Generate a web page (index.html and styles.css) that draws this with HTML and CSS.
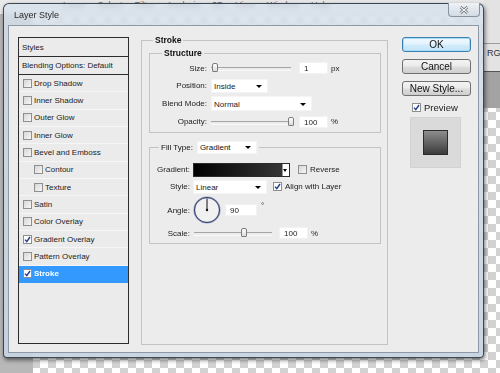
FILE: index.html
```html
<!DOCTYPE html>
<html lang="en">
<head>
  <meta charset="UTF-8">
  <meta name="viewport" content="width=device-width, initial-scale=1.0">
  <title>Layer Style</title>
  <link rel="stylesheet" href="styles.css">
</head>
<body>
  <div class="desk">
    <!-- Photoshop behind the dialog -->
    <div class="menubar">
      <span>Layer</span><span>Select</span><span>Filter</span><span>Analysis</span><span>3D</span><span>View</span><span>Window</span><span>Help</span>
    </div>
    <div class="side-panel">
      <div class="side-tab">RG</div>
    </div>

    <div class="window">
      <div class="titlebar">
        <span class="title">Layer Style</span>
        <button class="close-btn">
          <svg viewBox="0 0 10 8" width="10" height="8">
            <path d="M1.5 1 8.5 7M8.5 1 1.5 7" stroke="#5b5f66" stroke-width="2.6" fill="none"/>
            <path d="M1.5 1 8.5 7M8.5 1 1.5 7" stroke="#f4f6f8" stroke-width="1.1" fill="none"/>
          </svg>
        </button>
      </div>

      <div class="dialog">
        <ul class="style-list">
          <li class="list-head">Styles</li>
          <li class="list-head">Blending Options: Default</li>
          <li><span class="check"></span>Drop Shadow</li>
          <li><span class="check"></span>Inner Shadow</li>
          <li><span class="check"></span>Outer Glow</li>
          <li><span class="check"></span>Inner Glow</li>
          <li><span class="check"></span>Bevel and Emboss</li>
          <li class="sub"><span class="check"></span>Contour</li>
          <li class="sub"><span class="check"></span>Texture</li>
          <li><span class="check"></span>Satin</li>
          <li><span class="check"></span>Color Overlay</li>
          <li><span class="check on"><svg viewBox="0 0 7 7"><path d="M1 3.6 2.8 5.6 6 1"/></svg></span>Gradient Overlay</li>
          <li><span class="check"></span>Pattern Overlay</li>
          <li class="selected"><span class="check on"><svg viewBox="0 0 7 7"><path d="M1 3.6 2.8 5.6 6 1"/></svg></span>Stroke</li>
        </ul>

        <fieldset class="group stroke">
          <legend>Stroke</legend>

          <fieldset class="group structure">
            <legend>Structure</legend>
            <div class="form-grid">
              <label>Size:</label>
              <div class="ctrl">
                <div class="slider"><div class="range"><span class="thumb" style="left: 0%"></span></div></div>
                <span class="field">1</span><span class="unit">px</span>
              </div>

              <label>Position:</label>
              <div class="ctrl"><div class="select sel-position">Inside</div></div>

              <label>Blend Mode:</label>
              <div class="ctrl"><div class="select sel-blend">Normal</div></div>

              <label>Opacity:</label>
              <div class="ctrl">
                <div class="slider"><div class="range"><span class="thumb" style="left: 100%"></span></div></div>
                <span class="field">100</span><span class="unit">%</span>
              </div>
            </div>
          </fieldset>

          <fieldset class="group fill">
            <legend><span class="legend-label">Fill Type:</span><span class="select sel-fill">Gradient</span></legend>
            <div class="form-grid">
              <label>Gradient:</label>
              <div class="ctrl">
                <div class="gradient-pick"><span class="grad-fill"></span><span class="grad-arrow"></span></div>
                <span class="check gap-reverse"></span><span class="check-label">Reverse</span>
              </div>

              <label>Style:</label>
              <div class="ctrl">
                <div class="select sel-style">Linear</div>
                <span class="check on gap-align"><svg viewBox="0 0 7 7"><path d="M1 3.6 2.8 5.6 6 1"/></svg></span><span class="check-label">Align with Layer</span>
              </div>

              <label>Angle:</label>
              <div class="ctrl">
                <svg class="dial" viewBox="0 0 28 28" width="28" height="28">
                  <circle cx="14" cy="14" r="12.6" fill="#f1f1f1" stroke="#9aa3bd" stroke-width="2"/>
                  <circle cx="14" cy="14" r="12.6" fill="none" stroke="#3b4674" stroke-width="1"/>
                  <path d="M14 14V2.5" stroke="#111" stroke-width="1"/>
                  <circle cx="14" cy="14" r="1.2" fill="#111"/>
                </svg>
                <span class="field field-angle">90</span><span class="degree">°</span>
              </div>

              <label>Scale:</label>
              <div class="ctrl">
                <div class="slider slider-scale"><div class="range"><span class="thumb" style="left: 62%"></span></div></div>
                <span class="field">100</span><span class="unit">%</span>
              </div>
            </div>
          </fieldset>
        </fieldset>

        <div class="actions">
          <button class="btn btn-default">OK</button>
          <button class="btn">Cancel</button>
          <button class="btn">New Style...</button>
          <div class="preview-toggle">
            <span class="check on"><svg viewBox="0 0 7 7"><path d="M1 3.6 2.8 5.6 6 1"/></svg></span>Preview
          </div>
          <div class="preview-box"><span class="preview-swatch"></span></div>
        </div>
      </div>
    </div>
  </div>
</body>
</html>
```

FILE: styles.css
```css
* {
  margin: 0;
  padding: 0;
  box-sizing: border-box;
}

body {
  font-family: 'Liberation Sans', Arial, sans-serif;
  font-size: 8px;
  color: #1b1b1b;
  background: #b4b4b4;
}

/* Desktop behind the dialog */
.desk {
  position: relative;
  width: 500px;
  height: 373px;
  overflow: hidden;
  background:
    linear-gradient(#a3a3a3, #a3a3a3) right 0 top 72px / 16px 36px no-repeat,
    linear-gradient(#e3e3e3, #e3e3e3) right 0 top 0 / 16px 72px no-repeat,
    linear-gradient(#e9e9e9, #e9e9e9) left top / 100% 14px no-repeat,
    linear-gradient(#b8b8b8, #b8b8b8) left top / 33px 100% no-repeat,
    conic-gradient(#d2d2d2 25%, #fff 0 50%, #d2d2d2 0 75%, #fff 0) 0 0 / 16px 16px;
}

.menubar {
  position: absolute;
  top: 0;
  left: 63px;
  display: flex;
  gap: 12px;
  font-size: 9px;
  line-height: 10px;
  color: #6a6a6a;
}

.side-panel {
  position: absolute;
  left: 484px;
  top: 43px;
  width: 16px;
  height: 29px;
  border-top: 1px solid #9c9c9c;
  border-bottom: 1px solid #555;
}

.side-tab {
  padding: 4px 0 0 3px;
  font-size: 9px;
  color: #333;
  white-space: nowrap;
}

/* Aero window */
.window {
  position: absolute;
  left: 3px;
  top: 3px;
  width: 481px;
  height: 355px;
  padding: 0 4px 4px;
  border: 1px solid rgba(35, 45, 58, 0.85);
  border-radius: 6px 6px 4px 4px;
  background: linear-gradient(rgba(214, 224, 235, 0.8), rgba(198, 211, 225, 0.92));
  backdrop-filter: blur(2px);
  box-shadow: 1px 2px 4px rgba(0, 0, 0, 0.55);
}

.titlebar {
  display: flex;
  justify-content: space-between;
  align-items: flex-start;
  height: 21px;
  padding-left: 6px;
}

.title {
  align-self: center;
  font-size: 9px;
  color: #2b2b2b;
}

.close-btn {
  display: flex;
  align-items: center;
  justify-content: center;
  width: 32px;
  height: 14px;
  margin: -1px -1px 0 0;
  border: 1px solid #8893a1;
  border-top: 0;
  border-radius: 0 0 4px 4px;
  background: linear-gradient(#eef2f6, #d3dbe4);
}

.dialog {
  display: flex;
  align-items: flex-start;
  height: 328px;
  padding: 10px 7px 9px 9px;
  border: 1px solid #8d99a6;
  background: #ececec;
}

/* Styles list */
.style-list {
  list-style: none;
  flex: none;
  width: 111px;
  height: 307px;
  margin-top: 1px;
  border: 1px solid #2c2c2c;
  background: #ebebeb;
}

.style-list li {
  display: flex;
  align-items: center;
  height: 17.33px;
  padding-left: 4px;
  border-bottom: 1px solid #f6f6f6;
  white-space: nowrap;
}

.style-list .list-head {
  height: 19px;
  padding-left: 3px;
  border-bottom: 1px solid #2c2c2c;
}

.style-list .list-head + .list-head {
  height: 18px;
}

.style-list .sub {
  padding-left: 15px;
}

.style-list .selected {
  background: #3399ff;
  color: #fff;
  font-weight: bold;
  border-bottom-color: #3399ff;
}

.check {
  flex: none;
  display: inline-flex;
  align-items: center;
  justify-content: center;
  width: 9px;
  height: 9px;
  margin-right: 2px;
  border: 1px solid #8e8f8f;
  background: linear-gradient(135deg, #d6d6d6, #f7f7f7);
}

.check.on {
  background: #fff;
}

.check svg {
  width: 7px;
  height: 7px;
  fill: none;
  stroke: #1d3b8f;
  stroke-width: 1.4;
}

/* Group boxes */
.group {
  min-width: 0;
  border: 1px solid #c3c3c3;
}

.group legend {
  padding: 0 2px;
  line-height: 8px;
  font-size: 8.5px;
  font-weight: bold;
  color: #111;
}

.stroke {
  flex: none;
  width: 247px;
  height: 309px;
  margin-left: 12px;
  padding: 0 6px 0 7px;
}

.stroke > legend {
  margin-left: 4px;
}

.structure {
  margin-top: 5px;
  padding: 4px 0 3px;
}

.structure > legend {
  margin-left: 12px;
}

.fill {
  margin-top: 8px;
  padding: 9px 0 3px;
}

.fill > legend {
  margin-left: 9px;
  font-weight: normal;
  font-size: 8px;
  line-height: 13px;
}

.legend-label {
  display: inline-block;
  vertical-align: middle;
  margin-right: 4px;
}

/* Form rows */
.form-grid {
  display: grid;
  grid-template-columns: 57px auto;
  column-gap: 4px;
  align-items: center;
}

.structure .form-grid {
  grid-template-rows: 14px 14px 15px 14px;
  row-gap: 3.5px;
}

.fill .form-grid {
  grid-template-columns: 40px auto;
  column-gap: 3px;
  grid-template-rows: 14px 14px 27px 13px;
  row-gap: 3px;
}

.form-grid label {
  text-align: right;
  white-space: nowrap;
}

.ctrl {
  display: flex;
  align-items: center;
  height: 100%;
  white-space: nowrap;
}

.select {
  position: relative;
  display: inline-block;
  height: 14px;
  padding-left: 2px;
  line-height: 14px;
  background: #fff;
  border: 1px solid #f4f4f4;
}

.select::after {
  content: '';
  position: absolute;
  right: 5px;
  top: 50%;
  margin-top: -1px;
  border: 3px solid transparent;
  border-top-color: #000;
  border-bottom: 0;
}

.sel-position { width: 57px; }
.sel-blend { width: 101px; height: 15px; line-height: 15px; }
.sel-style { width: 74px; }

.sel-fill {
  width: 60px;
  height: 13px;
  line-height: 12px;
  vertical-align: middle;
}

.field {
  width: 29px;
  height: 12px;
  padding-left: 4px;
  line-height: 11px;
  background: #fff;
  border: 1px solid #f2f2f2;
}

.unit {
  margin-left: 3px;
}

.slider {
  position: relative;
  flex: none;
  width: 80px;
  height: 10px;
  margin-right: 8px;
}

.slider::before {
  content: '';
  position: absolute;
  left: 0;
  right: 0;
  top: 4px;
  height: 2px;
  border-top: 1px solid #a6a6a6;
  border-bottom: 1px solid #fafafa;
}

.range {
  position: absolute;
  top: 0;
  bottom: 0;
  left: 1px;
  right: 3px;
}

.thumb {
  position: absolute;
  top: 0;
  width: 6px;
  height: 9px;
  border: 1px solid #7d7d7d;
  border-radius: 2px 2px 1px 1px;
  background: linear-gradient(#fdfdfd, #dcdcdc);
}

.slider-scale {
  width: 78px;
  margin-left: 1px;
  margin-right: 7px;
}

.gradient-pick {
  display: flex;
  width: 97px;
  height: 14px;
  border: 1px solid #2a2a2a;
  background: #fff;
}

.grad-fill {
  flex: 1;
  background: linear-gradient(90deg, #000, #353535);
}

.grad-arrow {
  position: relative;
  width: 7px;
  border-left: 1px solid #9a9a9a;
}

.grad-arrow::after {
  content: '';
  position: absolute;
  left: 0;
  top: 5px;
  border: 2.5px solid transparent;
  border-top: 3px solid #000;
  border-bottom: 0;
}

.gap-reverse { margin-left: 8px; }
.gap-align { margin-left: 6px; }

.check-label {
  margin-left: 1px;
}

.dial {
  flex: none;
}

.field-angle {
  width: 32px;
  margin-left: 4px;
}

.degree {
  align-self: flex-start;
  margin: 4px 0 0 4px;
}

/* Buttons column */
.actions {
  flex: none;
  display: flex;
  flex-direction: column;
  width: 69px;
  margin: 1px 0 0 14px;
}

.btn {
  width: 69px;
  height: 15px;
  margin-bottom: 7px;
  font-family: 'Liberation Sans', Arial, sans-serif;
  font-size: 10px;
  line-height: 13px;
  color: #111;
  border: 1px solid #707070;
  border-radius: 3px;
  background: linear-gradient(#f3f3f3 0, #ebebeb 48%, #dddddd 52%, #cfcfcf 100%);
}

.btn-default {
  border-color: #3c7fb1;
  box-shadow: inset 0 0 0 1px #a6dcf7;
  background: linear-gradient(#f0f9fe 0, #e3f3fc 48%, #d2ecfb 52%, #c2e4f8 100%);
}

.preview-toggle {
  display: flex;
  align-items: center;
  height: 10px;
  margin: -1px 0 0 10px;
  font-size: 9.5px;
}

.preview-toggle .check {
  margin-right: 3px;
}

.preview-box {
  display: flex;
  align-items: center;
  justify-content: center;
  width: 51px;
  height: 51px;
  margin: 5px 0 0 8px;
  background: #dadada;
  border: 1px solid #d2d2d2;
}

.preview-swatch {
  width: 25px;
  height: 25px;
  border: 1px solid #2b2b2b;
  background: linear-gradient(#8d8d8d, #3b3b3b);
}
```
